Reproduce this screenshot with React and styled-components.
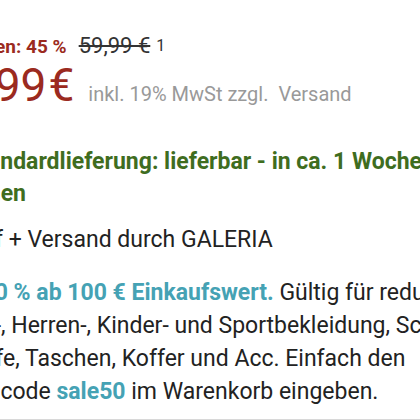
import React from 'react';
import styled, { createGlobalStyle } from 'styled-components';

const GlobalStyle = createGlobalStyle`
  html, body {
    margin: 0;
    padding: 0;
    background: #fff;
    overflow: hidden;
  }
  body {
    font-family: Roboto, "Liberation Sans", sans-serif;
    color: #222;
  }
`;

const Panel = styled.div`
  width: 420px;
  height: 420px;
  overflow: hidden;
  display: flex;
  flex-direction: column;
  white-space: nowrap;
`;

const PriceBlock = styled.div`
  padding-top: 34px;
  display: flex;
  flex-direction: column;
`;

const SavingRow = styled.div`
  display: flex;
  align-items: baseline;
  gap: 12px;
  margin-left: ${({ $shift }) => $shift}px;
  line-height: 24px;
`;

const Saving = styled.span`
  color: #9b2a20;
  font-weight: 700;
  font-size: 19px;
`;

const OldPrice = styled.span`
  color: #333;
  font-size: 22px;
  text-decoration: line-through;
  text-decoration-thickness: 1.5px;
`;

const Footnote = styled.sup`
  font-size: 16px;
  line-height: 0;
  color: #333;
  margin-left: -6px;
  position: relative;
  top: -2px;
`;

const PriceRow = styled.div`
  display: flex;
  align-items: baseline;
  gap: 14px;
  margin-left: ${({ $shift }) => $shift}px;
  margin-top: 1px;
  line-height: 50px;
`;

const Price = styled.span`
  color: #9b2a20;
  font-size: 46px;
`;

const Currency = styled.span`
  margin-left: 2px;
`;

const TaxNote = styled.span`
  color: #999;
  font-size: 20px;
`;

const Delivery = styled.div`
  margin-top: 27px;
  color: #3f6d1f;
  font-weight: 700;
  font-size: 23px;
  line-height: 32px;
`;

const Line = styled.div`
  margin-left: ${({ $shift }) => $shift || 0}px;
`;

const Seller = styled.div`
  margin-top: 14px;
  font-size: 23px;
  line-height: 32px;
  color: #222;
`;

const Promo = styled.div`
  margin-top: 20px;
  font-size: 23px;
  line-height: 33px;
  color: #222;
`;

const Accent = styled.span`
  color: #45a2b4;
  font-weight: 700;
`;

const Divider = styled.div`
  margin-top: 11px;
  height: 2px;
  border-top: 1px solid #d8d8d8;
  background: #ececec;
`;

export default function App() {
  return (
    <>
      <GlobalStyle />
      <Panel>
        <PriceBlock>
          <SavingRow $shift={-74}>
            <Saving>Sie sparen: 45 %</Saving>
            <OldPrice>59,99 €</OldPrice>
            <Footnote>1</Footnote>
          </SavingRow>
          <PriceRow $shift={-66}>
            <Price>
              32,99<Currency>€</Currency>
            </Price>
            <TaxNote>inkl. 19% MwSt zzgl.&nbsp; Versand</TaxNote>
          </PriceRow>
        </PriceBlock>
        <Delivery>
          <Line $shift={-34}>Standardlieferung: lieferbar - in ca. 1 Woche</Line>
          <Line $shift={-69}>bei Ihnen</Line>
        </Delivery>
        <Seller>
          <Line $shift={-76}>Verkauf + Versand durch GALERIA</Line>
        </Seller>
        <Promo>
          <Line $shift={-77}>
            <Accent>Extra 50 % ab 100 € Einkaufswert.</Accent> Gültig für reduzierte
          </Line>
          <Line $shift={-78}>Damen-, Herren-, Kinder- und Sportbekleidung, Schuhe,</Line>
          <Line $shift={-171}>Wäsche, Strümpfe, Taschen, Koffer und Acc. Einfach den</Line>
          <Line $shift={-77}>
            Aktionscode <Accent>sale50</Accent> im Warenkorb eingeben.
          </Line>
        </Promo>
        <Divider />
      </Panel>
    </>
  );
}
